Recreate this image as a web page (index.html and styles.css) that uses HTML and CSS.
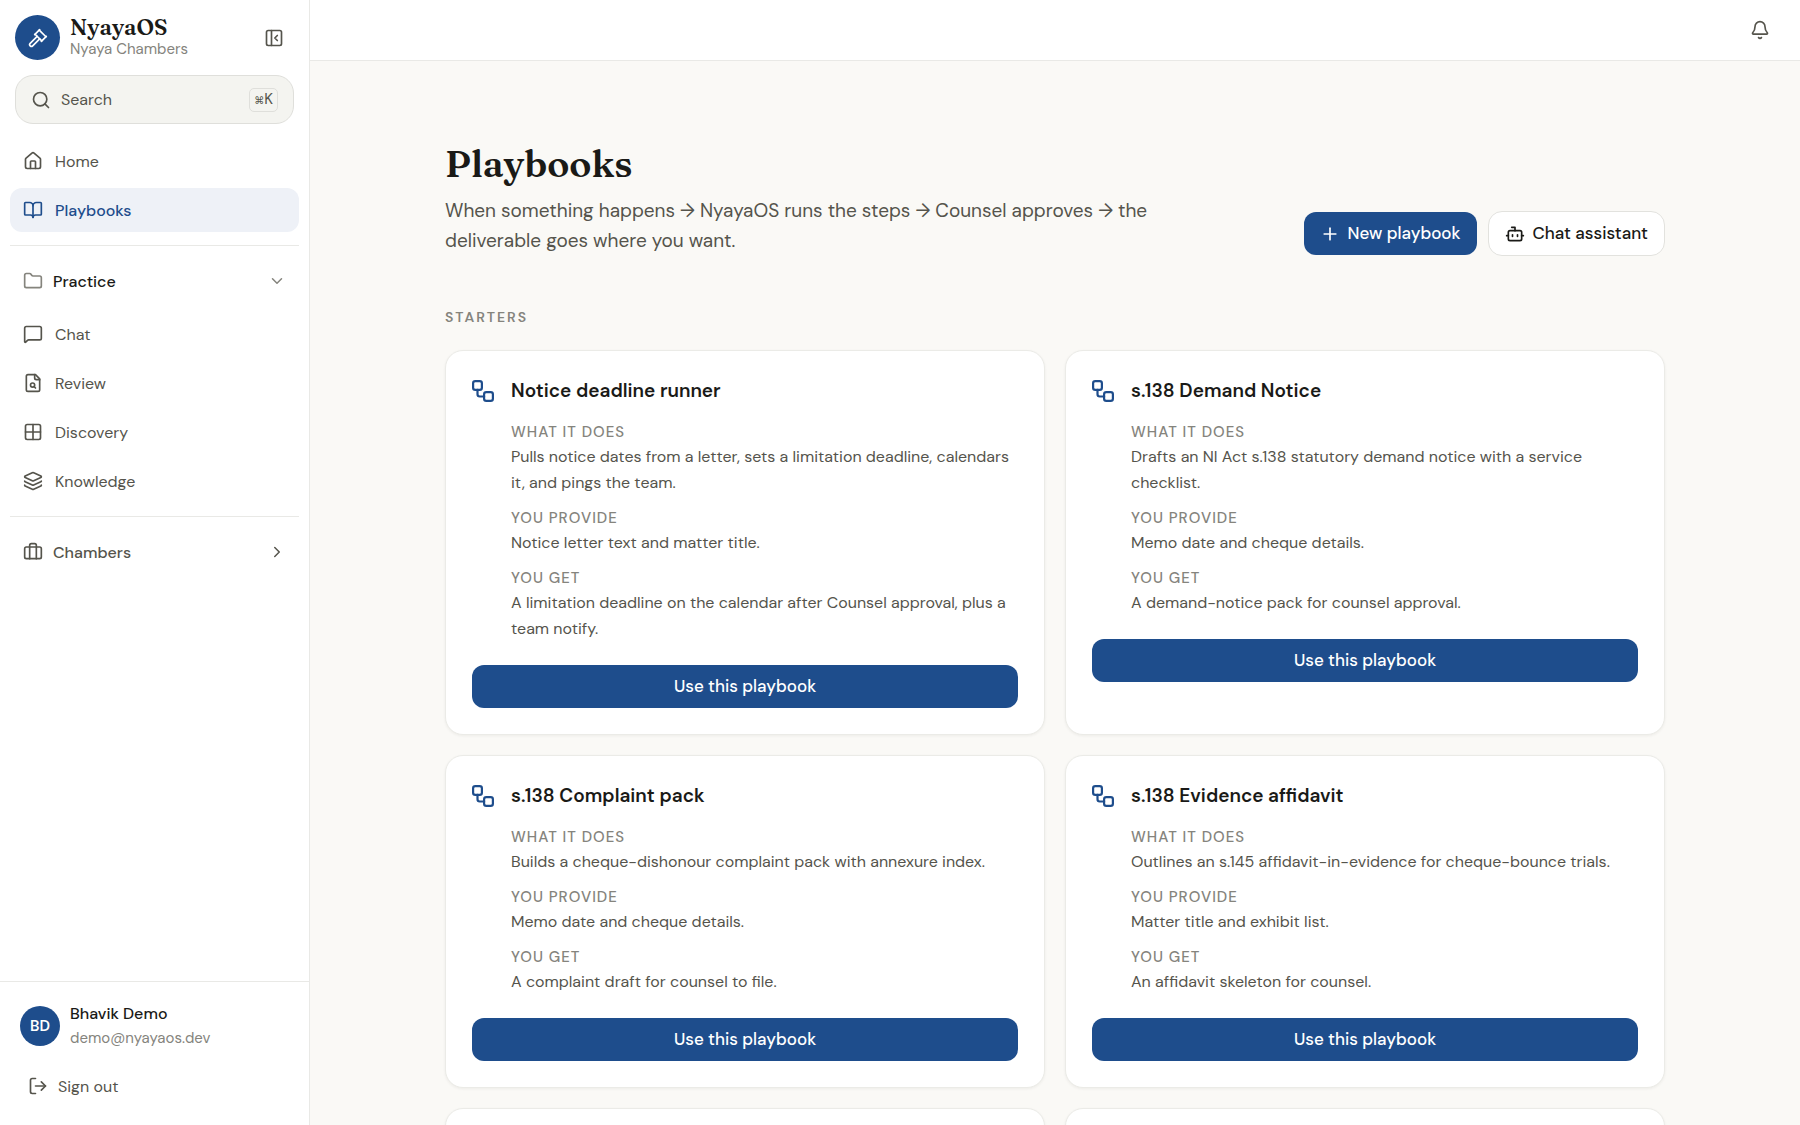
FILE: index.html
```html
<!DOCTYPE html>
<html lang="en">

<head>
    <meta charset="UTF-8">
    <meta name="viewport" content="width=device-width, initial-scale=1.0">
    <title>NyayaOS - Playbooks</title>
    <link rel="stylesheet" href="styles.css">
</head>

<body>
    <!-- shared icon shapes -->
    <svg class="sprite" aria-hidden="true">
        <symbol id="icon-workflow" viewBox="2 2 20 20">
            <rect x="3" y="3" width="8" height="8" rx="2" />
            <path d="M7 11v4a2 2 0 0 0 2 2h4" />
            <rect x="13" y="13" width="8" height="8" rx="2" />
        </symbol>
    </svg>

    <div class="app">
        <aside class="sidebar">
            <div class="brand">
                <div class="brand-logo">
                    <svg class="icon" viewBox="0 0 24 24">
                        <path d="m14 13-8.381 8.38a1 1 0 0 1-3.001-3l8.384-8.381" />
                        <path d="m16 16 6-6" />
                        <path d="m21.5 10.5-8-8" />
                        <path d="m8 8 6-6" />
                        <path d="m8.5 7.5 8 8" />
                    </svg>
                </div>
                <div class="brand-text">
                    <div class="brand-name">NyayaOS</div>
                    <div class="brand-org">Nyaya Chambers</div>
                </div>
                <button type="button" class="icon-button">
                    <svg class="icon" viewBox="0 0 24 24">
                        <rect x="3" y="3" width="18" height="18" rx="2" />
                        <path d="M9 3v18" />
                        <path d="m16 15-3-3 3-3" />
                    </svg>
                </button>
            </div>

            <button type="button" class="search">
                <svg class="icon" viewBox="0 0 24 24">
                    <circle cx="11" cy="11" r="8" />
                    <path d="m21 21-4.34-4.34" />
                </svg>
                <span class="search-label">Search</span>
                <kbd><span class="key-symbol">⌘</span>K</kbd>
            </button>

            <nav class="nav">
                <div class="nav-group">
                    <a href="#" class="nav-item">
                        <svg class="icon" viewBox="0 0 24 24">
                            <path d="M15 21v-8a1 1 0 0 0-1-1h-4a1 1 0 0 0-1 1v8" />
                            <path d="M3 10a2 2 0 0 1 .709-1.528l7-6a2 2 0 0 1 2.582 0l7 6A2 2 0 0 1 21 10v9a2 2 0 0 1-2 2H5a2 2 0 0 1-2-2z" />
                        </svg>
                        Home
                    </a>
                    <a href="#" class="nav-item active">
                        <svg class="icon" viewBox="0 0 24 24">
                            <path d="M12 7v14" />
                            <path d="M3 18a1 1 0 0 1-1-1V4a1 1 0 0 1 1-1h5a4 4 0 0 1 4 4 4 4 0 0 1 4-4h5a1 1 0 0 1 1 1v13a1 1 0 0 1-1 1h-6a3 3 0 0 0-3 3 3 3 0 0 0-3-3z" />
                        </svg>
                        Playbooks
                    </a>
                </div>

                <div class="nav-section">
                    <button type="button" class="nav-toggle open">
                        <svg class="icon" viewBox="0 0 24 24">
                            <path d="M20 20a2 2 0 0 0 2-2V8a2 2 0 0 0-2-2h-7.9a2 2 0 0 1-1.69-.9L9.6 3.9A2 2 0 0 0 7.93 3H4a2 2 0 0 0-2 2v13a2 2 0 0 0 2 2Z" />
                        </svg>
                        <span>Practice</span>
                        <svg class="icon chevron" viewBox="0 0 24 24">
                            <path d="m6 9 6 6 6-6" />
                        </svg>
                    </button>
                    <div class="nav-group">
                        <a href="#" class="nav-item">
                            <svg class="icon" viewBox="0 0 24 24">
                                <path d="M22 17a2 2 0 0 1-2 2H6.828a2 2 0 0 0-1.414.586l-2.202 2.202A.71.71 0 0 1 2 21.286V5a2 2 0 0 1 2-2h16a2 2 0 0 1 2 2z" />
                            </svg>
                            Chat
                        </a>
                        <a href="#" class="nav-item">
                            <svg class="icon" viewBox="0 0 24 24">
                                <path d="M15 2H6a2 2 0 0 0-2 2v16a2 2 0 0 0 2 2h12a2 2 0 0 0 2-2V7Z" />
                                <path d="M14 2v4a2 2 0 0 0 2 2h4" />
                                <circle cx="11.5" cy="14.5" r="2.5" />
                                <path d="M13.3 16.3 15 18" />
                            </svg>
                            Review
                        </a>
                        <a href="#" class="nav-item">
                            <svg class="icon" viewBox="0 0 24 24">
                                <rect x="3" y="3" width="18" height="18" rx="2" />
                                <path d="M3 12h18" />
                                <path d="M12 3v18" />
                            </svg>
                            Discovery
                        </a>
                        <a href="#" class="nav-item">
                            <svg class="icon" viewBox="0 0 24 24">
                                <path d="M12.83 2.18a2 2 0 0 0-1.66 0L2.6 6.08a1 1 0 0 0 0 1.83l8.58 3.91a2 2 0 0 0 1.66 0l8.58-3.9a1 1 0 0 0 0-1.83z" />
                                <path d="M2 12a1 1 0 0 0 .58.91l8.6 3.91a2 2 0 0 0 1.65 0l8.58-3.9A1 1 0 0 0 22 12" />
                                <path d="M2 17a1 1 0 0 0 .58.91l8.6 3.91a2 2 0 0 0 1.65 0l8.58-3.9A1 1 0 0 0 22 17" />
                            </svg>
                            Knowledge
                        </a>
                    </div>
                </div>

                <div class="nav-section">
                    <button type="button" class="nav-toggle">
                        <svg class="icon" viewBox="0 0 24 24">
                            <path d="M16 20V4a2 2 0 0 0-2-2h-4a2 2 0 0 0-2 2v16" />
                            <rect x="2" y="6" width="20" height="14" rx="2" />
                        </svg>
                        <span>Chambers</span>
                        <svg class="icon chevron" viewBox="0 0 24 24">
                            <path d="m9 18 6-6-6-6" />
                        </svg>
                    </button>
                </div>
            </nav>

            <div class="account">
                <div class="account-user">
                    <div class="avatar">BD</div>
                    <div>
                        <div class="account-name">Bhavik Demo</div>
                        <div class="account-email">demo@nyayaos.dev</div>
                    </div>
                </div>
                <button type="button" class="sign-out">
                    <svg class="icon" viewBox="0 0 24 24">
                        <path d="m16 17 5-5-5-5" />
                        <path d="M21 12H9" />
                        <path d="M9 21H5a2 2 0 0 1-2-2V5a2 2 0 0 1 2-2h4" />
                    </svg>
                    Sign out
                </button>
            </div>
        </aside>

        <div class="page">
            <header class="topbar">
                <button type="button" class="icon-button">
                    <svg class="icon" viewBox="0 0 24 24">
                        <path d="M10.268 21a2 2 0 0 0 3.464 0" />
                        <path d="M3.262 15.326A1 1 0 0 0 4 17h16a1 1 0 0 0 .74-1.673C19.41 13.956 18 12.499 18 8A6 6 0 0 0 6 8c0 4.499-1.411 5.956-2.738 7.326" />
                    </svg>
                </button>
            </header>

            <main class="content">
                <div class="page-header">
                    <div class="page-intro">
                        <h1>Playbooks</h1>
                        <p>When something happens → NyayaOS runs the steps → Counsel approves → the deliverable goes where you want.</p>
                    </div>
                    <div class="page-actions">
                        <button type="button" class="btn btn-primary">
                            <svg class="icon" viewBox="0 0 24 24">
                                <path d="M5 12h14" />
                                <path d="M12 5v14" />
                            </svg>
                            New playbook
                        </button>
                        <button type="button" class="btn btn-outline">
                            <svg class="icon" viewBox="0 0 24 24">
                                <path d="M12 8V4H8" />
                                <rect x="4" y="8" width="16" height="12" rx="2" />
                                <path d="M2 14h2" />
                                <path d="M20 14h2" />
                                <path d="M15 13v2" />
                                <path d="M9 13v2" />
                            </svg>
                            Chat assistant
                        </button>
                    </div>
                </div>

                <h2 class="section-title">Starters</h2>

                <div class="cards">
                    <article class="card">
                        <div class="card-body">
                            <svg class="icon card-icon"><use href="#icon-workflow" /></svg>
                            <div class="card-text">
                                <h3>Notice deadline runner</h3>
                                <dl>
                                    <dt>What it does</dt>
                                    <dd>Pulls notice dates from a letter, sets a limitation deadline, calendars it, and pings the team.</dd>
                                    <dt>You provide</dt>
                                    <dd>Notice letter text and matter title.</dd>
                                    <dt>You get</dt>
                                    <dd>A limitation deadline on the calendar after Counsel approval, plus a team notify.</dd>
                                </dl>
                            </div>
                        </div>
                        <button type="button" class="btn btn-primary">Use this playbook</button>
                    </article>

                    <article class="card">
                        <div class="card-body">
                            <svg class="icon card-icon"><use href="#icon-workflow" /></svg>
                            <div class="card-text">
                                <h3>s.138 Demand Notice</h3>
                                <dl>
                                    <dt>What it does</dt>
                                    <dd>Drafts an NI Act s.138 statutory demand notice with a service checklist.</dd>
                                    <dt>You provide</dt>
                                    <dd>Memo date and cheque details.</dd>
                                    <dt>You get</dt>
                                    <dd>A demand-notice pack for counsel approval.</dd>
                                </dl>
                            </div>
                        </div>
                        <button type="button" class="btn btn-primary">Use this playbook</button>
                    </article>

                    <article class="card">
                        <div class="card-body">
                            <svg class="icon card-icon"><use href="#icon-workflow" /></svg>
                            <div class="card-text">
                                <h3>s.138 Complaint pack</h3>
                                <dl>
                                    <dt>What it does</dt>
                                    <dd>Builds a cheque-dishonour complaint pack with annexure index.</dd>
                                    <dt>You provide</dt>
                                    <dd>Memo date and cheque details.</dd>
                                    <dt>You get</dt>
                                    <dd>A complaint draft for counsel to file.</dd>
                                </dl>
                            </div>
                        </div>
                        <button type="button" class="btn btn-primary">Use this playbook</button>
                    </article>

                    <article class="card">
                        <div class="card-body">
                            <svg class="icon card-icon"><use href="#icon-workflow" /></svg>
                            <div class="card-text">
                                <h3>s.138 Evidence affidavit</h3>
                                <dl>
                                    <dt>What it does</dt>
                                    <dd>Outlines an s.145 affidavit-in-evidence for cheque-bounce trials.</dd>
                                    <dt>You provide</dt>
                                    <dd>Matter title and exhibit list.</dd>
                                    <dt>You get</dt>
                                    <dd>An affidavit skeleton for counsel.</dd>
                                </dl>
                            </div>
                        </div>
                        <button type="button" class="btn btn-primary">Use this playbook</button>
                    </article>

                    <article class="card"></article>
                    <article class="card"></article>
                </div>
            </main>
        </div>
    </div>
</body>

</html>
```
FILE: styles.css
```css
* {
    margin: 0;
    padding: 0;
    box-sizing: border-box;
}

body {
    background: #faf9f6;
    color: #1a1a17;
    font-family: "DM Sans", Inter, sans-serif;
    font-size: 16px;
}

button {
    font: inherit;
    color: inherit;
    background: none;
    border: none;
    cursor: pointer;
}

a {
    color: inherit;
    text-decoration: none;
}

.sprite {
    display: none;
}

.icon {
    width: 20px;
    height: 20px;
    flex-shrink: 0;
    fill: none;
    stroke: currentColor;
    stroke-width: 2;
    stroke-linecap: round;
    stroke-linejoin: round;
}

.icon-button {
    display: flex;
    color: #55544c;
}

.app {
    display: flex;
    height: 100vh;
    overflow: hidden;
}

/* Sidebar */

.sidebar {
    display: flex;
    flex-direction: column;
    width: 310px;
    flex-shrink: 0;
    background: #fff;
    border-right: 1px solid #e9e9e6;
    color: #55544c;
}

.brand {
    display: flex;
    align-items: center;
    gap: 10px;
    padding: 15px 25px 15px 15px;
}

.brand-logo {
    display: flex;
    align-items: center;
    justify-content: center;
    width: 45px;
    height: 45px;
    border-radius: 50%;
    background: #1e4d8c;
    color: #fff;
}

.brand-text {
    flex: 1;
    align-self: flex-start;
}

.brand-name {
    color: #1a1a17;
    font-family: Fraunces, "Liberation Serif", serif;
    font-size: 22px;
    font-weight: 600;
    line-height: 24px;
}

.brand-org {
    color: #85847d;
    font-size: 15px;
    line-height: 20px;
}

.search {
    display: flex;
    align-items: center;
    gap: 10px;
    height: 49px;
    margin: 0 15px;
    padding: 0 15px;
    background: #f4f4f0;
    border: 1px solid #dfdfdb;
    border-radius: 18px;
}

.search-label {
    flex: 1;
    text-align: left;
}

kbd {
    padding: 0 4px;
    border: 1px solid #dfdfdb;
    border-radius: 5px;
    font-family: inherit;
    font-size: 15px;
    line-height: 20px;
}

.key-symbol {
    font-size: 10px;
}

.nav {
    flex: 1;
    padding: 15px 10px;
}

.nav-group {
    display: flex;
    flex-direction: column;
    gap: 5px;
}

.nav-item,
.nav-toggle {
    display: flex;
    align-items: center;
    height: 44px;
    padding: 0 13px;
    border-radius: 12px;
}

.nav-item {
    gap: 12px;
}

.nav-item.active {
    background: #eef1f7;
    color: #1e4d8c;
    font-weight: 500;
}

.nav-section {
    margin-top: 13px;
    padding-top: 13px;
    border-top: 1px solid #e9e9e6;
}

.nav-section .nav-group {
    margin-top: 9px;
}

.nav-toggle {
    gap: 10px;
    width: 100%;
    font-weight: 500;
}

.nav-toggle span {
    flex: 1;
    text-align: left;
}

.nav-toggle.open span {
    color: #1a1a17;
}

.nav-toggle.open .icon {
    color: #85847d;
}

.nav-toggle .chevron {
    width: 18px;
    height: 18px;
}

.account {
    padding: 20px 20px 17px;
    border-top: 1px solid #e9e9e6;
}

.account-user {
    display: flex;
    align-items: center;
    gap: 10px;
    line-height: 24px;
}

.avatar {
    display: flex;
    align-items: center;
    justify-content: center;
    width: 40px;
    height: 40px;
    border-radius: 50%;
    background: #1e4d8c;
    color: #fff;
    font-size: 15px;
    font-weight: 600;
}

.account-name {
    color: #1a1a17;
    font-weight: 500;
}

.account-email {
    color: #85847d;
    font-size: 15px;
}

.sign-out {
    display: flex;
    align-items: center;
    gap: 10px;
    height: 44px;
    margin-top: 14px;
    padding: 0 8px;
}

/* Page */

.page {
    display: flex;
    flex-direction: column;
    flex: 1;
    min-width: 0;
}

.topbar {
    display: flex;
    align-items: center;
    justify-content: flex-end;
    height: 61px;
    flex-shrink: 0;
    padding: 0 30px;
    background: #fff;
    border-bottom: 1px solid #e9e9e6;
}

.content {
    flex: 1;
    width: 100%;
    max-width: 1300px;
    margin: 0 auto;
    padding: 79px 40px 0;
    overflow: hidden;
}

.page-header {
    display: flex;
    align-items: flex-end;
    justify-content: space-between;
    gap: 20px;
}

.page-intro {
    max-width: 756px;
}

.page-intro h1 {
    font-family: Fraunces, "Liberation Serif", serif;
    font-size: 37px;
    font-weight: 600;
    line-height: 48px;
}

.page-intro p {
    margin-top: 8px;
    color: #55544c;
    font-size: 19px;
    line-height: 30px;
}

.page-actions {
    display: flex;
    align-items: center;
    gap: 11px;
}

.btn {
    display: flex;
    align-items: center;
    justify-content: center;
    gap: 8px;
    padding: 0 16px;
    border-radius: 12px;
    font-size: 17px;
    font-weight: 500;
    line-height: 43px;
}

.btn-primary {
    background: #1e4d8c;
    color: #fff;
}

.btn-outline {
    background: #fff;
    border: 1px solid #e2e2de;
    border-radius: 14px;
}

.section-title {
    margin-top: 51px;
    color: #85847d;
    font-size: 14px;
    font-weight: 600;
    letter-spacing: 2px;
    line-height: 20px;
    text-transform: uppercase;
}

.cards {
    display: grid;
    grid-template-columns: 1fr 1fr;
    gap: 20px;
    margin-top: 23px;
}

.card {
    padding: 26px;
    background: #fff;
    border: 1px solid #ebebe7;
    border-radius: 18px;
    box-shadow: 0 1px 3px rgba(26, 26, 23, 0.06);
}

.card-body {
    display: flex;
    gap: 17px;
}

.card-icon {
    width: 22px;
    height: 22px;
    margin-top: 3px;
    color: #1e4d8c;
}

.card-text {
    flex: 1;
}

.card h3 {
    margin-bottom: 15px;
    font-size: 19px;
    font-weight: 600;
    line-height: 28px;
}

.card dt {
    color: #85847d;
    font-size: 15px;
    font-weight: 500;
    letter-spacing: 1px;
    line-height: 24px;
    text-transform: uppercase;
}

.card dd {
    color: #55544c;
    font-size: 16px;
    line-height: 26px;
}

.card dd + dt {
    margin-top: 10px;
}

.card .btn {
    width: 100%;
    margin-top: 23px;
}
```
